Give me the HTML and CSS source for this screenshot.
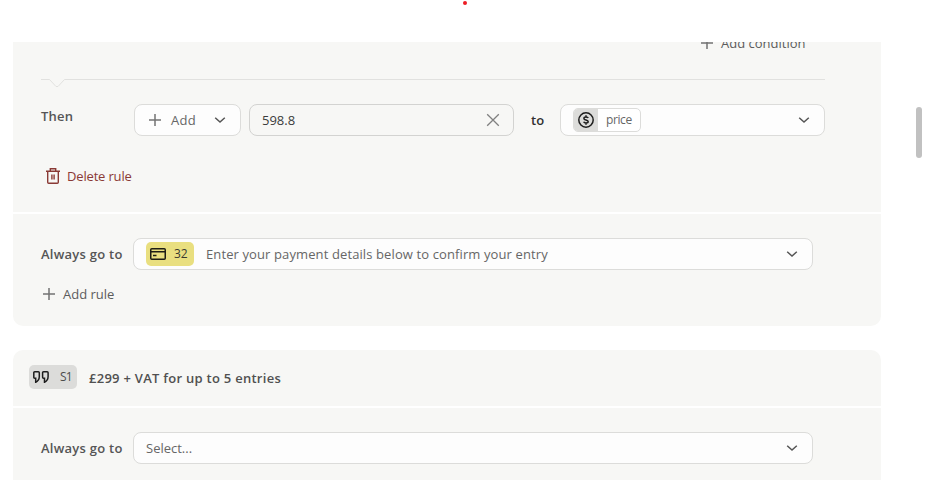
FILE: index.html
```html
<!DOCTYPE html>
<html lang="en">
<head>
<meta charset="utf-8">
<title>Logic rules</title>
<link rel="stylesheet" href="styles.css">
</head>
<body>
<svg class="defs" width="0" height="0" aria-hidden="true">
  <symbol id="chevron" viewBox="0 0 12 8"><path d="M1.2 1.8 6 6l4.8-4.2" fill="none" stroke="currentColor" stroke-width="1.5"/></symbol>
  <symbol id="plus" viewBox="0 0 12 12"><path d="M6 0v12M0 6h12" fill="none" stroke="currentColor" stroke-width="1.5"/></symbol>
</svg>
<header class="top"><span class="dot"></span></header>
<div class="view">
  <main class="rules">
    <section class="card">
      <div class="rule">
        <div class="add-condition"><svg class="plus"><use href="#plus"/></svg><span class="t-cond">Add condition</span></div>
        <svg class="divider" viewBox="0 0 784 9"><path d="M0 .5H8.500L15 7.500h2L23.500.5H784" fill="none" stroke="#e1e1df"/></svg>
        <div class="then">
          <span class="label then-label">Then</span>
          <div class="field op"><svg class="plus"><use href="#plus"/></svg><span class="t-add">Add</span><svg class="chevron"><use href="#chevron"/></svg></div>
          <div class="field value"><span class="t-value">598.8</span><svg class="clear" viewBox="0 0 14 14"><path d="m1.200 1.200 11.600 11.600m0-11.600L1.200 12.800" fill="none" stroke="currentColor" stroke-width="1.300"/></svg></div>
          <span class="to">to</span>
          <div class="field target">
            <span class="variable"><span class="coin"><svg viewBox="0 0 16 16" width="16" height="16" fill="none" stroke="#1d1d1d" stroke-width="1.500"><circle cx="8" cy="8" r="7.200"/><path d="M10.200 6.100C9.900 5.200 9.100 4.900 8 4.900c-1.200 0-2.100.5-2.100 1.500 0 2.100 4.300 1 4.300 3.200 0 1-1 1.500-2.200 1.500-1.100 0-2-.4-2.300-1.300M8 3.300v1.600m0 6.200v1.600"/></svg></span><span class="t-price">price</span></span>
            <svg class="chevron"><use href="#chevron"/></svg>
          </div>
        </div>
        <div class="delete"><svg viewBox="0 0 14 16" width="14" height="16" fill="none" stroke="currentColor" stroke-width="1.400"><path d="M0 3.200h14M4.300 3V.8h5.400V3M1.700 3.200v11.100q0 1 1 1h8.600q1 0 1-1V3.200M5.900 6.500v5m2.200-5v5"/></svg><span class="t-delete">Delete rule</span></div>
      </div>
      <div class="always">
        <div class="row">
          <span class="label t-always">Always go to</span>
          <div class="field wide"><span class="badge pay"><svg viewBox="0 0 16 12" width="16" height="12" fill="none" stroke="#1d1d15" stroke-width="1.500"><rect x=".75" y=".75" width="14.500" height="10.500" rx="1"/><path d="M1 3.800h14M3 7.500h3.500"/></svg><span>32</span></span><span class="t-entry">Enter your payment details below to confirm your entry</span><svg class="chevron"><use href="#chevron"/></svg></div>
        </div>
        <div class="add-rule"><svg class="plus"><use href="#plus"/></svg><span class="t-rule">Add rule</span></div>
      </div>
    </section>
    <section class="card">
      <div class="heading"><span class="badge statement"><svg viewBox="0 0 16 12" width="16" height="12" fill="none" stroke="#1d1d1d" stroke-width="1.500"><path d="M1.700.8h3.600q1 0 1 1V5.500c0 3-1 4.500-3.600 5.700V7.200H1.700q-.9 0-.9-.9V1.700q0-.9.9-.9ZM10.500.8h3.600q1 0 1 1V5.500c0 3-1 4.500-3.600 5.700V7.200h-1q-.9 0-.9-.9V1.700q0-.9.9-.9Z"/></svg><span>S1</span></span><span class="t-title">£299 + VAT for up to 5 entries</span></div>
      <div class="always">
        <div class="row">
          <span class="label t-always">Always go to</span>
          <div class="field wide"><span class="t-select">Select...</span><svg class="chevron"><use href="#chevron"/></svg></div>
        </div>
      </div>
    </section>
  </main>
  <div class="scrollbar"><div class="thumb"></div></div>
</div>
</body>
</html>
```
FILE: styles.css
```css
* { box-sizing: border-box; }
body {
  margin: 0;
  height: 480px;
  overflow: hidden;
  background: #fff;
  color: #484848;
  font: 13px/20px "Open Sans", "Noto Sans", sans-serif;
  white-space: nowrap;
}
svg { display: block; flex: none; }
.defs { position: absolute; }
.top { height: 42px; padding: 1px 0 0 463px; }
.dot { display: block; width: 4px; height: 4px; border-radius: 50%; background: #ed1c24; }
.view { display: flex; height: 438px; overflow: hidden; }
.rules { display: flex; flex-direction: column; gap: 24px; width: 868px; margin-left: 13px; }
.card { display: flex; flex-direction: column; gap: 2px; flex: none; }
.rule, .always, .heading { background: #f7f7f5; }
.rule { height: 170px; }
.card:first-child .always { border-radius: 0 0 10px 10px; }
.always { height: 112px; padding: 24px 68px 0 28px; }
.plus { width: 12px; height: 12px; color: #737373; }
.chevron { width: 12px; height: 8px; margin-left: auto; color: #555; }
.add-condition { display: flex; align-items: center; gap: 8px; height: 20px; margin: -9px 0 0 688px; font-weight: 500; color: #5c5c5c; }
.divider { width: 784px; height: 9px; margin: 26px 0 0 28px; }
.then { display: flex; align-items: center; height: 32px; margin: 16px 56px 0 28px; }
.label { font-weight: 600; color: #555; letter-spacing: 0.25px; }
.then-label { width: 93px; margin-top: -8px; }
.field { display: flex; align-items: center; height: 32px; border: 1px solid #dcdcda; border-radius: 8px; background: #fdfdfd; color: #666; }
.op { width: 107px; padding: 0 14px; gap: 10px; }
.t-add { letter-spacing: 0.3px; }
.value { width: 265px; margin-left: 8px; padding: 0 13px 0 12px; background: #f7f7f5; border-color: #d3d3d1; color: #3c3c3c; }
.clear { width: 14px; height: 14px; margin-left: auto; color: #808080; }
.to { width: 46px; padding-left: 17px; font-weight: 600; color: #303030; }
.target { width: 265px; padding: 0 14px 0 12px; }
.variable { display: flex; align-items: center; width: 68px; height: 24px; border: 1px solid #dcdcda; border-radius: 5px; overflow: hidden; background: #fff; font-size: 12px; letter-spacing: -0.4px; }
.coin { display: flex; align-items: center; justify-content: center; width: 24px; height: 24px; margin-right: 8px; background: #dcdcda; }
.delete { display: flex; align-items: center; gap: 7px; height: 20px; margin: 30px 0 0 33px; font-weight: 500; letter-spacing: -0.17px; color: #8a3a35; }
.row { display: flex; align-items: center; height: 32px; }
.t-always { width: 92px; }
.t-entry { letter-spacing: 0.11px; }
.wide { width: 680px; padding: 0 14px 0 12px; }
.badge { display: flex; align-items: center; width: 48px; height: 24px; padding-left: 4px; gap: 8px; border-radius: 5px; font-size: 12px; color: #3a3a30; }
.pay { margin-right: 12px; background: #e9df80; }
.statement { margin-right: 12px; gap: 11px; background: #dcdcda; color: #4c4c4c; letter-spacing: -0.8px; }
.add-rule { display: flex; align-items: center; gap: 8px; height: 20px; margin: 14px 0 0 2px; font-weight: 500; color: #5c5c5c; }
.heading { display: flex; align-items: center; height: 56px; padding: 0 0 2px 16px; border-radius: 10px 10px 0 0; font-weight: 600; color: #505050; }
.heading .badge { font-weight: 400; }
.t-title { padding-top: 2px; letter-spacing: 0.27px; }
.scrollbar { width: 6px; margin: 65px 0 0 35px; }
.thumb { height: 51px; border-radius: 3px; background: #c1c1c1; }
```
